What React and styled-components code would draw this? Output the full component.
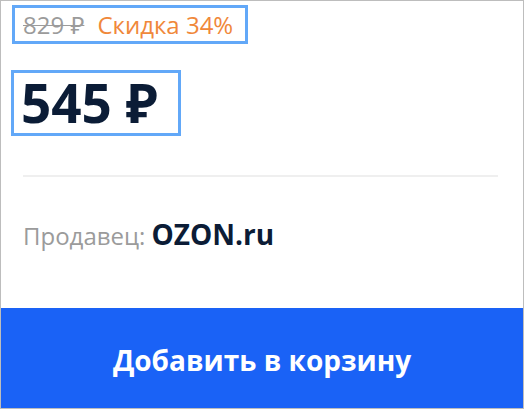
import React from "react";
import styled, { createGlobalStyle } from "styled-components";

const Global = createGlobalStyle`
  html, body { margin: 0; padding: 0; background: #fff; }
  body { font-family: "Open Sans", "Noto Sans", sans-serif; }
  * { box-sizing: border-box; }
`;

const Card = styled.div`
  width: 524px;
  height: 409px;
  border: 1px solid #bdbdbd;
  display: flex;
  flex-direction: column;
  background: #fff;
`;

const Body = styled.div`
  flex: 1;
  padding: 4px 25px 0 22px;
  display: flex;
  flex-direction: column;
  align-items: flex-start;
`;

const Highlight = styled.div`
  display: inline-flex;
  align-items: center;
  border: 3px solid #62a8f8;
  margin-left: ${(p) => p.$shift}px;
  padding: ${(p) => p.$pad};
  margin-top: ${(p) => p.$top || 0}px;
  gap: ${(p) => p.$gap || 0}px;
`;

const OldPrice = styled.span`
  font-size: 24px;
  line-height: 33px;
  color: #9b9b9b;
  text-decoration: line-through;
  text-decoration-thickness: 1px;
`;

const Discount = styled.span`
  font-size: 24px;
  line-height: 33px;
  color: #f0883a;
`;

const Price = styled.span`
  font-size: 53px;
  line-height: 60px;
  font-weight: 700;
  color: #0b1c36;
`;

const Divider = styled.hr`
  align-self: stretch;
  border: none;
  height: 2px;
  background: #efefef;
  margin: 39px 0 0;
`;

const Seller = styled.div`
  margin-top: 40px;
  font-size: 24px;
  line-height: 34px;
  color: #9b9b9b;
`;

const SellerName = styled.span`
  font-size: 28px;
  font-weight: 700;
  color: #0b1c36;
`;

const Button = styled.button`
  height: 100px;
  width: 100%;
  border: none;
  background: #1a62f6;
  color: #fff;
  font-family: "Open Sans", "Noto Sans", sans-serif;
  font-size: 28px;
  font-weight: 700;
  padding: 4px 0 0;
  cursor: pointer;
`;

export default function App() {
  return (
    <>
      <Global />
      <Card>
        <Body>
          <Highlight $shift={-11} $pad="0 12px 0 8px" $gap={13}>
            <OldPrice>829 ₽</OldPrice>
            <Discount>Скидка 34%</Discount>
          </Highlight>
          <Highlight $shift={-12} $pad="0 21px 0 7px" $top={26}>
            <Price>545 ₽</Price>
          </Highlight>
          <Divider />
          <Seller>
            Продавец: <SellerName>OZON.ru</SellerName>
          </Seller>
        </Body>
        <Button>Добавить в корзину</Button>
      </Card>
    </>
  );
}
